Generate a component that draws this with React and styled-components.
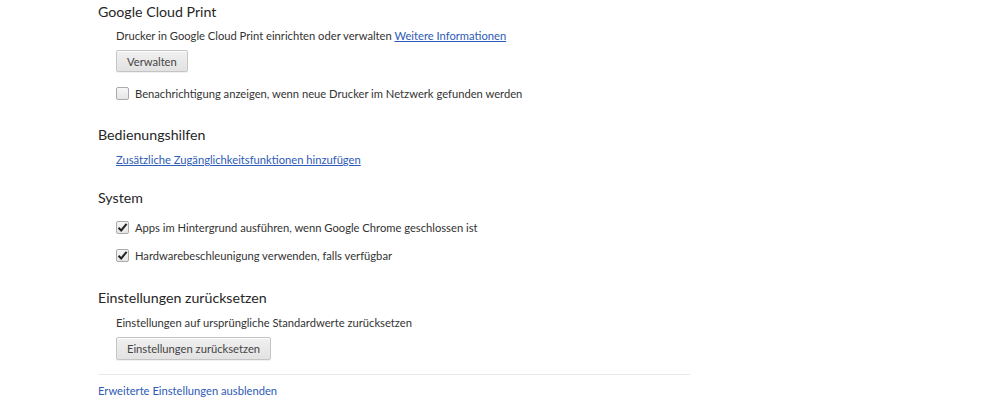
import React from "react";
import styled, { createGlobalStyle } from "styled-components";

const Global = createGlobalStyle`
  html, body { margin: 0; padding: 0; background: #fff; }
  body { font-family: Lato, "Open Sans", sans-serif; color: #303030; }
`;

const Page = styled.div`
  width: 990px;
  height: 416px;
  overflow: hidden;
  padding-left: 98px;
  box-sizing: border-box;
`;

const Column = styled.div`
  width: 592px;
  display: flex;
  flex-direction: column;
`;

const Section = styled.section`
  display: flex;
  flex-direction: column;
  margin-bottom: ${(p) => p.$gap ?? 20}px;
`;

const Heading = styled.h3`
  margin: 0;
  font-size: 14.2px;
  font-weight: 400;
  line-height: 24px;
  height: 24px;
  color: #262626;
`;

const Body = styled.div`
  padding-left: 18px;
  display: flex;
  flex-direction: column;
  align-items: flex-start;
  margin-top: ${(p) => p.$top ?? 4}px;
`;

const Text = styled.div`
  font-size: 11.2px;
  line-height: 16px;
  color: #333;
`;

const Link = styled.a`
  color: #2d5bb5;
  text-decoration: ${(p) => (p.$plain ? "none" : "underline")};
  cursor: pointer;
`;

const Button = styled.button`
  margin-top: ${(p) => p.$top ?? 6}px;
  height: ${(p) => p.$h ?? 22}px;
  padding: 0 10px;
  font-family: inherit;
  font-size: 11.2px;
  color: #444;
  border: 1px solid #c4c4c4;
  border-radius: 2px;
  background: linear-gradient(#f0f0f0, #e2e2e2);
  box-shadow: inset 0 1px 1px #fff, 0 1px 0 rgba(0, 0, 0, 0.06);
`;

const CheckRow = styled.label`
  display: flex;
  align-items: center;
  gap: 6px;
  height: 18px;
  margin-top: ${(p) => p.$top ?? 0}px;
  font-size: 11.2px;
  color: #333;
`;

const Box = styled.span`
  width: 11px;
  height: 11px;
  border: 1px solid #aaa;
  border-radius: 2px;
  background: linear-gradient(#f6f6f6, #e6e6e6);
  display: flex;
  align-items: center;
  justify-content: center;
  flex: none;
`;

const Separator = styled.div`
  height: 1px;
  background: #eaeaea;
  margin-top: 14px;
`;

const Footer = styled.div`
  margin-top: 8px;
  font-size: 11.2px;
  line-height: 16px;
`;

function Check({ checked, children, top }) {
  return (
    <CheckRow $top={top}>
      <Box>
        {checked && (
          <svg width="11" height="11" viewBox="0 0 11 11">
            <path d="M1.5 5.8 L4.2 8.5 L9.6 1.8" fill="none" stroke="#222" strokeWidth="2" />
          </svg>
        )}
      </Box>
      {children}
    </CheckRow>
  );
}

export default function App() {
  return (
    <>
      <Global />
      <Page>
        <Column>
          <Section $gap={21}>
            <Heading>Google Cloud Print</Heading>
            <Body>
              <Text>
                Drucker in Google Cloud Print einrichten oder verwalten{" "}
                <Link>Weitere Informationen</Link>
              </Text>
              <Button>Verwalten</Button>
              <Check top={12}>Benachrichtigung anzeigen, wenn neue Drucker im Netzwerk gefunden werden</Check>
            </Body>
          </Section>
          <Section $gap={18}>
            <Heading>Bedienungshilfen</Heading>
            <Body $top={5}>
              <Text>
                <Link>Zusätzliche Zugänglichkeitsfunktionen hinzufügen</Link>
              </Text>
            </Body>
          </Section>
          <Section $gap={22}>
            <Heading>System</Heading>
            <Body $top={8}>
              <Check checked>Apps im Hintergrund ausführen, wenn Google Chrome geschlossen ist</Check>
              <Check checked top={10}>Hardwarebeschleunigung verwenden, falls verfügbar</Check>
            </Body>
          </Section>
          <Section $gap={0}>
            <Heading>Einstellungen zurücksetzen</Heading>
            <Body $top={5}>
              <Text>Einstellungen auf ursprüngliche Standardwerte zurücksetzen</Text>
              <Button $h={23}>Einstellungen zurücksetzen</Button>
            </Body>
          </Section>
          <Separator />
          <Footer>
            <Link $plain>Erweiterte Einstellungen ausblenden</Link>
          </Footer>
        </Column>
      </Page>
    </>
  );
}
